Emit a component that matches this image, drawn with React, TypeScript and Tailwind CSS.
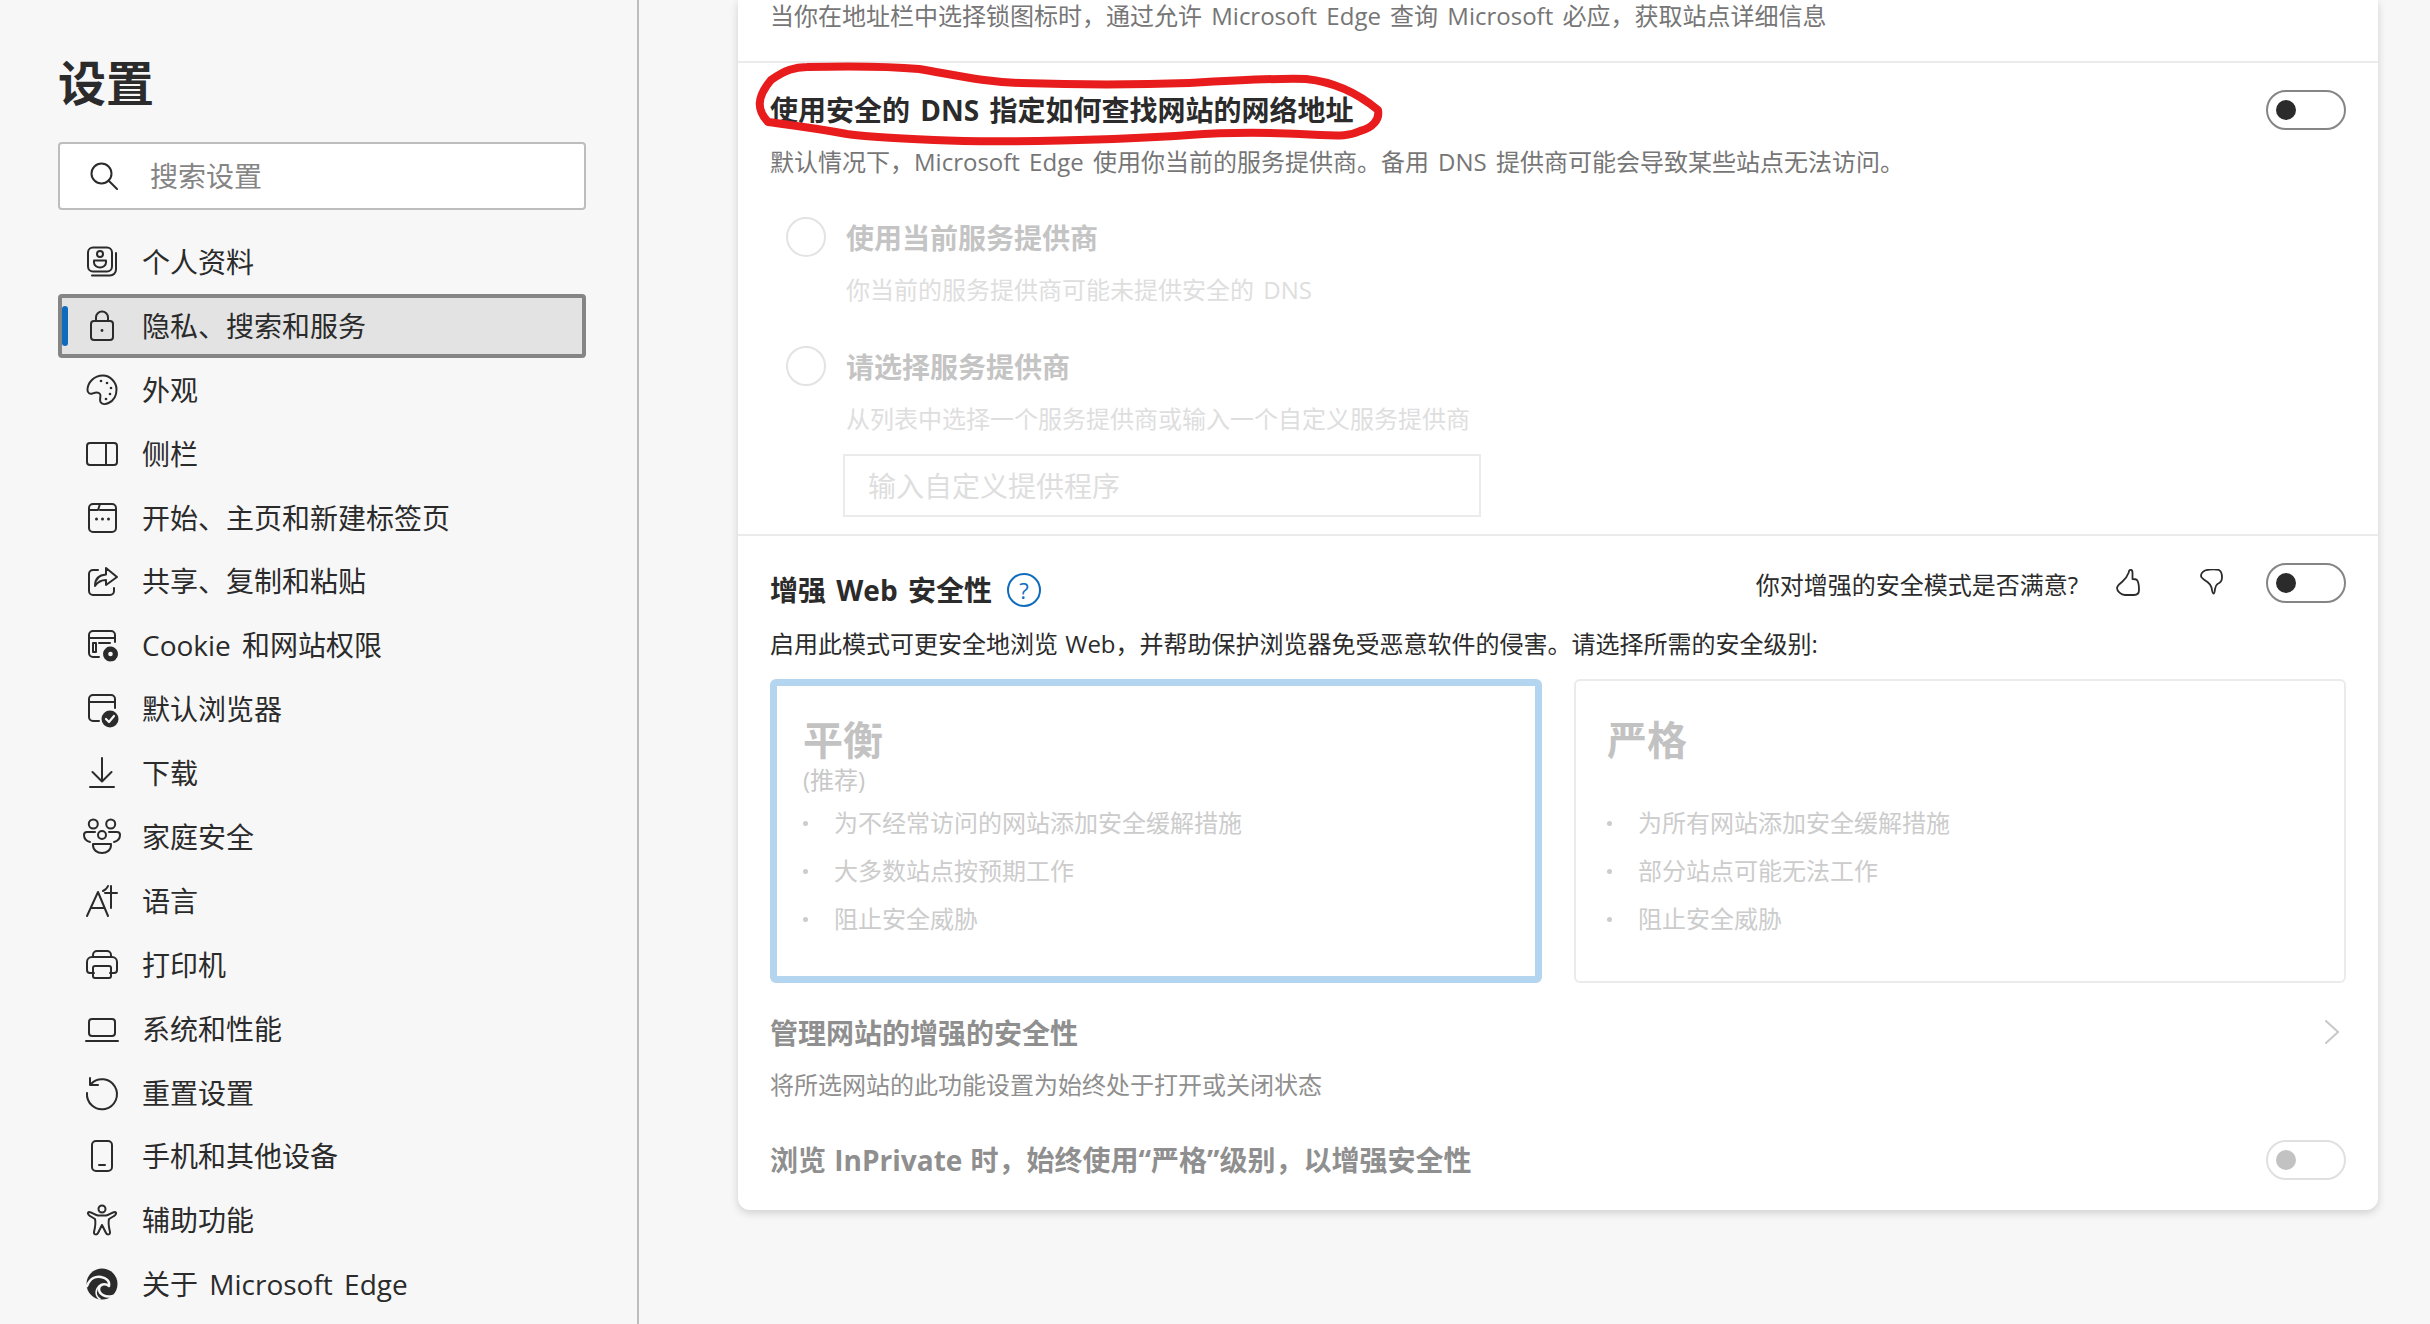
const icons: Record<string, React.ReactNode> = {
  profile: (
    <>
      <rect x="2" y="1.5" width="24" height="24" rx="5" />
      <path d="M6 29.5h18a6 6 0 0 0 6-6V7" />
      <circle cx="14" cy="8" r="3" />
      <path d="M8 14.5h12v2a6 5 0 0 1-12 0z" />
    </>
  ),
  lock: (
    <>
      <rect x="5" y="11" width="22" height="19" rx="3" />
      <path d="M10 11V7.5a6 6 0 0 1 12 0V11" />
      <circle cx="16" cy="20.5" r="1.4" fill="#2b2b2b" stroke="none" />
    </>
  ),
  palette: (
    <>
      <path d="M17 1.5C8 1.5 1.5 8.5 1.5 16c0 3 2.5 4.500 5 3.500 3-1 5.500-2 7.500.500 1.500 2-1 5 .500 8 1.500 2.500 5 2.500 8 1C27 27 30.500 22 30.500 15.500 30.500 8 24 1.500 17 1.500z" />
      <g fill="#2b2b2b" stroke="none">
        <circle cx="15" cy="7" r="1.300" />
        <circle cx="21" cy="9" r="1.300" />
        <circle cx="25" cy="14" r="1.300" />
        <circle cx="24" cy="20" r="1.300" />
        <circle cx="20" cy="25" r="1.300" />
      </g>
    </>
  ),
  sidebar: (
    <>
      <rect x="1" y="5" width="30" height="22" rx="3" />
      <path d="M20 5v22" />
    </>
  ),
  start: (
    <>
      <rect x="3" y="2" width="27" height="28" rx="4" />
      <path d="M3 8h9l2-6M14 8h16" />
      <g fill="#2b2b2b" stroke="none">
        <circle cx="10.500" cy="17" r="1.500" />
        <circle cx="16.500" cy="17" r="1.500" />
        <circle cx="22.500" cy="17" r="1.500" />
      </g>
    </>
  ),
  share: (
    <>
      <path d="M12 5H7a4 4 0 0 0-4 4v17a4 4 0 0 0 4 4h17a4 4 0 0 0 4-4v-3" />
      <path d="M20 3l11 9-11 8v-5c-5 0-8 1.500-11 6 0-7 4-11 11-11.500z" />
    </>
  ),
  cookie: (
    <>
      <path d="M13 28H7a4 4 0 0 1-4-4V6a4 4 0 0 1 4-4h18a4 4 0 0 1 4 4v7" />
      <path d="M3 9h26M24 14H13M7 14h3v9H7z" />
      <circle cx="24.500" cy="25" r="6" fill="#2b2b2b" stroke="#2b2b2b" strokeWidth="3" strokeDasharray="3 1.700" />
      <circle cx="24.500" cy="25" r="2.300" fill="#f7f7f7" stroke="none" />
    </>
  ),
  browser: (
    <>
      <path d="M13 28H7a4 4 0 0 1-4-4V6a4 4 0 0 1 4-4h18a4 4 0 0 1 4 4v9" />
      <path d="M3 9h26" />
      <circle cx="24" cy="26" r="8.500" fill="#2b2b2b" stroke="none" />
      <path d="M20 26l3 3 5-6" stroke="#f7f7f7" strokeWidth="2.200" />
    </>
  ),
  download: <path d="M16 1v23M6.500 15l9.500 9.500 9.500-9.500M4 30h24" />,
  family: (
    <>
      <circle cx="7.300" cy="3" r="4.500" />
      <circle cx="24.700" cy="3" r="4.500" />
      <circle cx="16" cy="14" r="4" />
      <path d="M9 11H1c-2 0-3 1-3 3 0 3 2 6 6 7M23 11h8c2 0 3 1 3 3 0 3-2 6-6 7" />
      <path d="M7 23h18v1c0 5-4 8-9 8s-9-3-9-8z" />
    </>
  ),
  language: (
    <>
      <path d="M1 31L12 7l10 24M5.500 23H18.500" />
      <path d="M17 6c2-1 4-2 5-5M25 1v22M19 8h12" />
    </>
  ),
  printer: (
    <>
      <path d="M8 24H4a3 3 0 0 1-3-3v-8a5 5 0 0 1 5-5h20a5 5 0 0 1 5 5v8a3 3 0 0 1-3 3h-4" />
      <path d="M7 8V6a4 4 0 0 1 4-4h10a4 4 0 0 1 4 4v2" />
      <rect x="7" y="17" width="18" height="12" rx="2" />
    </>
  ),
  laptop: (
    <>
      <rect x="3" y="6" width="26" height="17" rx="3" />
      <path d="M0 28h32" />
    </>
  ),
  reset: (
    <>
      <path d="M5 7a15 15 0 1 1-4 9" />
      <path d="M4 1v7h8" />
    </>
  ),
  phone: (
    <>
      <rect x="6" y="1" width="20" height="30" rx="4" />
      <path d="M13 25h6" />
    </>
  ),
  access: (
    <>
      <circle cx="16" cy="5" r="3.500" />
      <path d="M3 8c3 0 6 3 9 3.500h8C23 11 26 8 29 8c2 .500 1 3-1 4l-5 3c-1 4 0 9 1 13 .500 3-3 3-4 1l-4-8-4 8c-1 2-4.500 2-4-1 1-4 2-9 1-13l-5-3C2 11 1 8.500 3 8z" />
    </>
  ),
  edge: (
    <>
      <circle cx="16" cy="16" r="15.500" fill="#2b2b2b" stroke="none" />
      <path d="M1 18c3-8 9-10 14-9 5 1 9 4 8 9-4-3-10-2-10 3 0 5 6 9 14 7" stroke="#f7f7f7" strokeWidth="2.500" />
      <path d="M14 31c-5-3-5-9-1-13" stroke="#f7f7f7" strokeWidth="1.500" />
    </>
  ),
};

const navItems = [
  ["profile", "个人资料"],
  ["lock", "隐私、搜索和服务"],
  ["palette", "外观"],
  ["sidebar", "侧栏"],
  ["start", "开始、主页和新建标签页"],
  ["share", "共享、复制和粘贴"],
  ["cookie", "Cookie 和网站权限"],
  ["browser", "默认浏览器"],
  ["download", "下载"],
  ["family", "家庭安全"],
  ["language", "语言"],
  ["printer", "打印机"],
  ["laptop", "系统和性能"],
  ["reset", "重置设置"],
  ["phone", "手机和其他设备"],
  ["access", "辅助功能"],
  ["edge", "关于 Microsoft Edge"],
];

function NavIcon({ name }: { name: string }) {
  return (
    <svg
      viewBox="0 0 32 32"
      fill="none"
      stroke="#2b2b2b"
      strokeWidth="2"
      strokeLinecap="round"
      strokeLinejoin="round"
      className="h-8 w-8 shrink-0 overflow-visible"
    >
      {icons[name]}
    </svg>
  );
}

function Toggle({ disabled }: { disabled?: boolean }) {
  return (
    <div
      className={`flex h-10 w-[80px] shrink-0 items-center rounded-full border-2 pl-[8px] ${
        disabled ? "border-[#e0e0e0]" : "border-[#858585]"
      }`}
    >
      <div className={`h-5 w-5 rounded-full ${disabled ? "bg-[#c2c2c2]" : "bg-[#2b2b2b]"}`}></div>
    </div>
  );
}

function Radio({ label, sub }: { label: string; sub: string }) {
  return (
    <div>
      <div className="flex h-10 items-center gap-[20px] pl-4">
        <div className="h-10 w-10 rounded-full border-2 border-[#e3e3e3]"></div>
        <span className="pt-[2px] text-[28px] font-bold text-[#c4c4c4]">{label}</span>
      </div>
      <div className="mt-[16px] h-[34px] pl-[76px] text-[24px] leading-[34px] text-[#dedede]">{sub}</div>
    </div>
  );
}

function LevelCard({
  title,
  sub,
  bullets,
  selected,
}: {
  title: string;
  sub?: string;
  bullets: string[];
  selected?: boolean;
}) {
  return (
    <div
      className={`h-[304px] w-[772px] rounded-[6px] ${
        selected ? "border-[7px] border-[#b3d5f0] pl-[26px] pt-[26px]" : "border-2 border-[#ebebeb] pl-[31px] pt-[31px]"
      }`}
    >
      <div className="h-[53px] text-[40px] font-bold leading-[56px] text-[#c2c2c2]">{title}</div>
      <div className="h-[30px] text-[24px] leading-[30px] text-[#c8c8c8]">{sub}</div>
      <div className="mt-[4px] flex flex-col">
        {bullets.map((b) => (
          <div key={b} className="flex h-[48px] items-center text-[24px] text-[#cccccc]">
            <span className="h-[5px] w-[5px] rounded-full bg-[#cccccc]"></span>
            <span className="ml-[26px]">{b}</span>
          </div>
        ))}
      </div>
    </div>
  );
}

export default function App() {
  return (
    <div className="flex h-[1324px] w-[2430px] overflow-hidden bg-[#f7f7f7] font-['Open_Sans','Noto_Sans_CJK_SC',sans-serif] text-[#2b2b2b] [word-spacing:3px]">
      <aside className="h-full w-[639px] shrink-0 border-r-2 border-[#bdbdbd] pl-[58px] pt-[55px]">
        <h1 className="h-[56px] text-[48px] font-bold leading-[56px]">设置</h1>
        <div className="mt-[31px] flex h-[68px] w-[528px] items-center rounded-[4px] border-2 border-[#bdbdbd] bg-white pl-[30px]">
          <svg viewBox="0 0 28 28" fill="none" stroke="#2b2b2b" strokeWidth="2" strokeLinecap="round" className="h-7 w-7 shrink-0">
            <circle cx="11.500" cy="11.500" r="10" />
            <path d="M18.500 18.500L27 27" />
          </svg>
          <span className="ml-[32px] text-[28px] text-[#858585]">搜索设置</span>
        </div>
        <nav className="mt-5 flex w-[528px] flex-col [word-spacing:4px]">
          {navItems.map(([icon, label], i) => (
            <div
              key={label}
              className={`relative flex h-[63.9px] items-center gap-6 rounded-[4px] border-4 pl-6 text-[28px] ${
                i === 1 ? "border-[#858585] bg-[#e3e3e3]" : "border-transparent"
              }`}
            >
              {i === 1 && <span className="absolute left-0 top-[8px] h-[40px] w-[6px] rounded-full bg-[#0f6cbd]"></span>}
              <NavIcon name={icon} />
              <span>{label}</span>
            </div>
          ))}
        </nav>
      </aside>

      <main className="flex-1 pl-[99px]">
        <div className="relative h-[1210px] w-[1640px] rounded-b-[12px] bg-white px-8 shadow-[0_3px_8px_rgba(0,0,0,0.16)]">
          <div className="-mx-8 h-[63px] border-b-2 border-[#ebebeb] px-8 text-[24px] leading-[32px] text-[#767676]">
            当你在地址栏中选择锁图标时，通过允许 Microsoft Edge 查询 Microsoft 必应，获取站点详细信息
          </div>

          <div className="-mx-8 h-[473px] border-b-2 border-[#ebebeb] px-8 pt-[27px]">
            <div className="flex h-10 items-center justify-between">
              <span className="text-[28px] font-bold">使用安全的 DNS 指定如何查找网站的网络地址</span>
              <Toggle />
            </div>
            <div className="mt-[15px] h-[34px] text-[24px] leading-[34px] text-[#767676]">
              默认情况下，Microsoft Edge 使用你当前的服务提供商。备用 DNS 提供商可能会导致某些站点无法访问。
            </div>
            <div className="mt-[38px] flex flex-col gap-[39px]">
              <Radio label="使用当前服务提供商" sub="你当前的服务提供商可能未提供安全的 DNS" />
              <div>
                <Radio label="请选择服务提供商" sub="从列表中选择一个服务提供商或输入一个自定义服务提供商" />
                <div className="ml-[73px] mt-[18px] flex h-[63px] w-[638px] items-center border-2 border-[#ebebeb] pl-[23px] text-[28px] text-[#dedede]">
                  输入自定义提供程序
                </div>
              </div>
            </div>
          </div>

          <div className="flex h-[91px] items-start justify-between pt-[27px]">
            <div className="mt-[7px] flex h-10 items-center gap-[15px]">
              <span className="text-[28px] font-bold">增强 Web 安全性</span>
              <div className="flex h-[34px] w-[34px] items-center justify-center rounded-full border-2 border-[#0f6cbd] text-[22px] text-[#0f6cbd]">
                ?
              </div>
            </div>
            <div className="flex h-10 items-center">
              <span className="mt-[3px] text-[24px] text-[#2b2b2b]">你对增强的安全模式是否满意?</span>
              <svg viewBox="0 0 24 27" fill="none" stroke="#2b2b2b" strokeWidth="1.800" strokeLinejoin="round" className="mb-[2px] ml-[38px] h-[27px] w-[24px]">
                <path d="M15 1c-1.500-.500-2 1-2.500 3-1 3-3 6-6.500 9-3 2.500-5 4-5 6 0 3 4 7 8 7h9c3 0 5-2 5-5 0-4-.500-8-2-10-1-1-3-1-4.500-1V4c0-2-.500-3-1.500-3z" />
              </svg>
              <svg viewBox="0 0 23 26" fill="none" stroke="#2b2b2b" strokeWidth="1.800" strokeLinejoin="round" className="mb-[2px] ml-[60px] mr-[43px] h-[26px] w-[23px]">
                <path d="M5 1.500C9 .500 15 0 19 1c2 1 3 4 3 7.500 0 3-2 5.500-4.500 6.500-1.500 1-2 2-2.500 5-.300 2.500-.500 4.500-1.500 4.500-1 0-1.500-3-2-6-.500-2.500-1.500-3.500-4-5.500C4.500 11 1 9 1 7c0-2 2-4.500 4-5.500z" />
              </svg>
              <Toggle />
            </div>
          </div>

          <div className="h-[34px] text-[24px] leading-[34px] [word-spacing:1px]">
            启用此模式可更安全地浏览 Web，并帮助保护浏览器免受恶意软件的侵害。请选择所需的安全级别:
          </div>

          <div className="mt-[18px] flex justify-between">
            <LevelCard
              selected
              title="平衡"
              sub="(推荐)"
              bullets={["为不经常访问的网站添加安全缓解措施", "大多数站点按预期工作", "阻止安全威胁"]}
            />
            <LevelCard
              title="严格"
              bullets={["为所有网站添加安全缓解措施", "部分站点可能无法工作", "阻止安全威胁"]}
            />
          </div>

          <div className="mt-[30px] flex h-10 items-center justify-between">
            <span className="text-[28px] font-bold text-[#8f8f8f]">管理网站的增强的安全性</span>
            <svg viewBox="0 0 14 24" fill="none" stroke="#c8c8c8" strokeWidth="2" strokeLinecap="round" className="mb-[2px] mr-[7px] h-6 w-[14px]">
              <path d="M1 1l12 11L1 23" />
            </svg>
          </div>
          <div className="mt-[15px] h-[34px] text-[24px] leading-[34px] text-[#8f8f8f]">
            将所选网站的此功能设置为始终处于打开或关闭状态
          </div>
          <div className="mt-[38px] flex h-10 items-center justify-between">
            <span className="text-[28px] font-bold text-[#8f8f8f] [word-spacing:1px]">浏览 InPrivate 时，始终使用“严格”级别，以增强安全性</span>
            <Toggle disabled />
          </div>
        </div>
      </main>

      {/* red marker ring drawn over the DNS heading */}
      <svg viewBox="0 0 2430 1324" fill="none" className="pointer-events-none absolute left-0 top-0 h-[1324px] w-[2430px]">
        <path
          d="M768 122C757 110 756 98 771 80C785 70 795 67 807 67C850 66 885 66 919 69C960 76 985 82 1021 83C1080 85 1135 85 1189 83C1240 80 1280 78 1306 79C1335 82 1360 95 1378 110C1380 120 1372 128 1360 131C1350 136 1340 136 1320 135C1270 132 1230 132 1189 135C1120 140 1000 143 934 140C890 138 860 136 847 134C815 128 790 125 768 122Z"
          stroke="#e81c1c"
          strokeWidth="8"
          strokeLinejoin="round"
        />
      </svg>
    </div>
  );
}
